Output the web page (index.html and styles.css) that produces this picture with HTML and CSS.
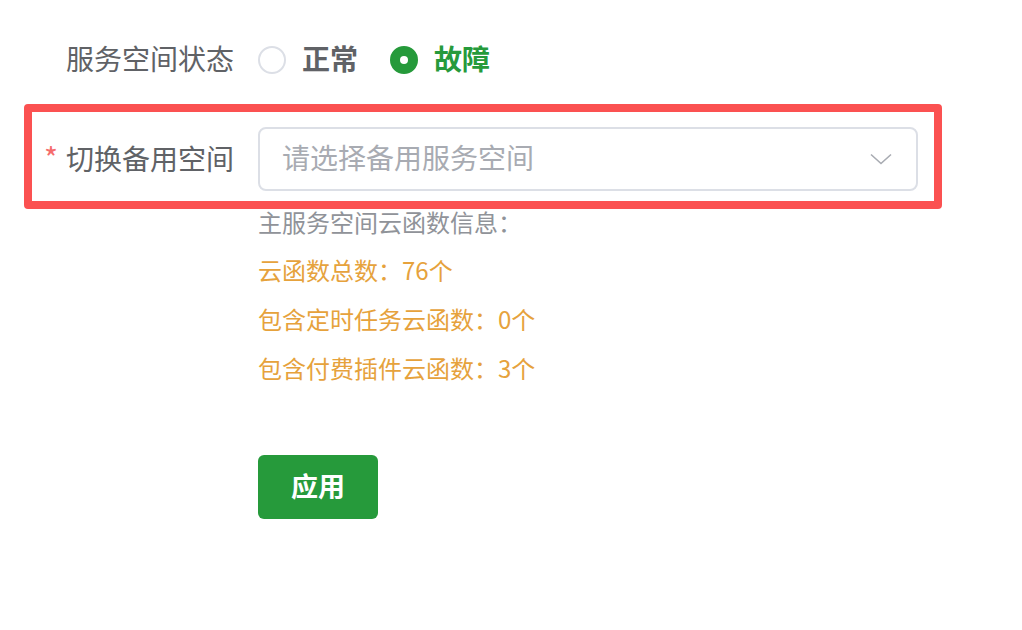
FILE: index.html
```html
<!DOCTYPE html>
<html lang="zh-CN">
<head>
<meta charset="utf-8">
<title>服务空间</title>
<link rel="stylesheet" href="styles.css">
</head>
<body>
<div class="form">
  <div class="row">
    <div class="label">服务空间状态</div>
    <div class="radios">
      <label class="radio"><span class="dot"></span><span class="radio-text">正常</span></label>
      <label class="radio checked"><span class="dot"></span><span class="radio-text">故障</span></label>
    </div>
  </div>
  <div class="highlight">
    <div class="row">
      <div class="label"><span class="req">*</span>切换备用空间</div>
      <div class="select">
        <span class="placeholder">请选择备用服务空间</span>
        <svg class="chev" width="22" height="12" viewBox="0 0 22 12"><path d="M1 1.5 L11 10.5 L21 1.5" fill="none" stroke="#a8abb2" stroke-width="1.6"/></svg>
      </div>
    </div>
  </div>
  <div class="info">
    <div class="info-title">主服务空间云函数信息：</div>
    <div class="info-line">云函数总数：76个</div>
    <div class="info-line">包含定时任务云函数：0个</div>
    <div class="info-line">包含付费插件云函数：3个</div>
  </div>
  <button class="btn">应用</button>
</div>
</body>
</html>
```

FILE: styles.css
```css
html, body {
  margin: 0;
  padding: 0;
  background: #ffffff;
}
body {
  font-family: "Noto Sans CJK SC", "Noto Sans", sans-serif;
}
.form {
  padding: 28px 0 0 32px;
}
.row {
  display: flex;
  align-items: center;
  height: 64px;
}
.label {
  width: 226px;
  box-sizing: border-box;
  padding-right: 24px;
  padding-bottom: 4px;
  text-align: right;
  font-size: 28px;
  color: #606266;
  line-height: 40px;
}
.req {
  color: #f56c6c;
  margin-right: 8px;
  font-size: 30px;
}
.radios {
  display: flex;
  align-items: center;
}
.radio {
  display: flex;
  align-items: center;
  margin-right: 32px;
}
.dot {
  width: 28px;
  height: 28px;
  box-sizing: border-box;
  border: 2px solid #dcdfe6;
  border-radius: 50%;
  background: #fff;
  display: flex;
  align-items: center;
  justify-content: center;
}
.radio-text {
  padding-left: 16px;
  padding-bottom: 4px;
  font-size: 28px;
  line-height: 40px;
  font-weight: 700;
  color: #606266;
}
.checked .dot {
  border-color: #269a3b;
  background: #269a3b;
}
.checked .dot::after {
  content: "";
  width: 8px;
  height: 8px;
  border-radius: 50%;
  background: #fff;
}
.checked .radio-text {
  color: #269a3b;
}
.highlight {
  margin-top: 12px;
  margin-left: -8px;
  width: 918px;
  box-sizing: border-box;
  border: 8px solid #fb5151;
  border-radius: 4px;
  padding: 15px 16px 10px 0;
}
.select {
  width: 660px;
  height: 64px;
  box-sizing: border-box;
  border: 2px solid #dcdfe6;
  border-radius: 8px;
  display: flex;
  align-items: center;
  justify-content: space-between;
  padding: 0 24px 0 22px;
}
.placeholder {
  font-size: 28px;
  line-height: 40px;
  padding-bottom: 4px;
  color: #a8abb2;
}
.chev {
  display: block;
}
.info {
  margin-left: 226px;
  font-size: 24px;
  line-height: 28px;
  margin-top: -1px;
}
.info-title {
  color: #909399;
}
.info-line {
  color: #e6a23c;
  margin-top: 21px;
}
.info-title + .info-line {
  margin-top: 20px;
}
.btn {
  display: block;
  margin: 73px 0 0 226px;
  width: 120px;
  height: 64px;
  border: none;
  border-radius: 6px;
  background: #269a3b;
  color: #fff;
  font-family: "Noto Sans CJK SC", sans-serif;
  font-size: 27px;
  font-weight: 700;
  padding: 0 0 4px 0;
}
```
